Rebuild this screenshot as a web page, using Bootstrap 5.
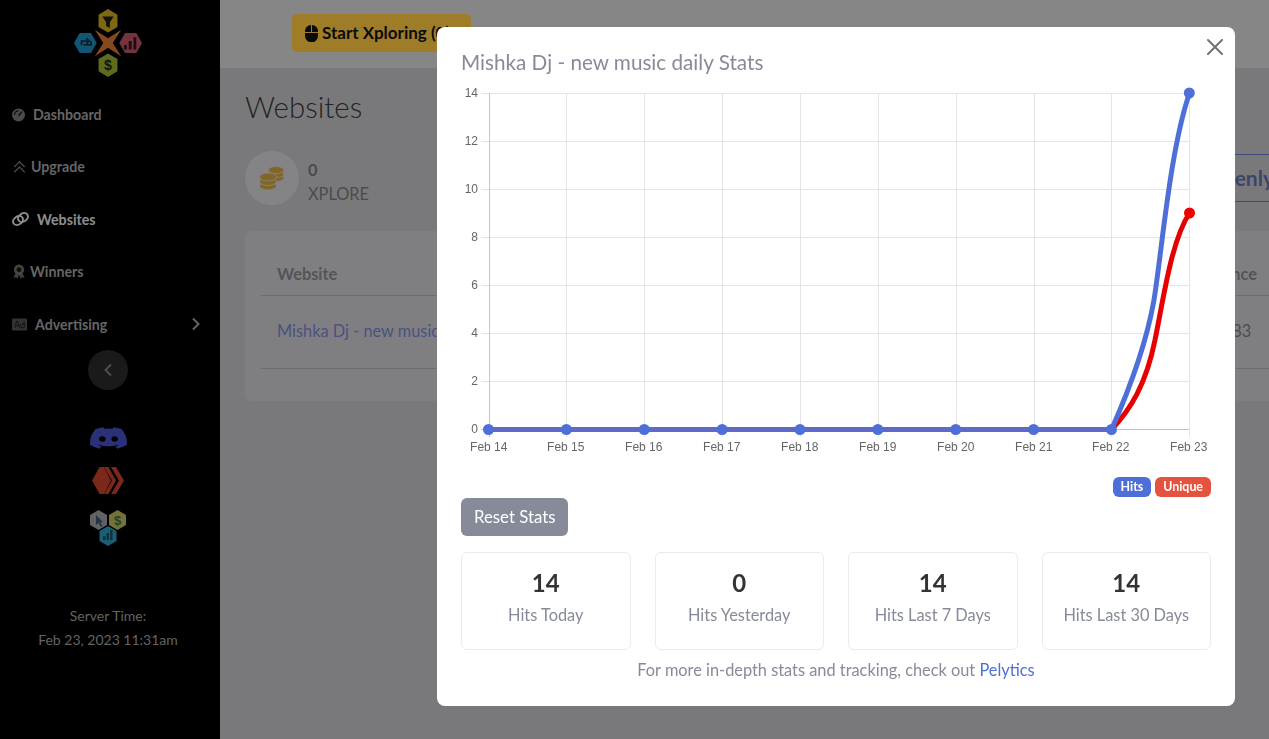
<!DOCTYPE html>
<html lang="en">
<head>
    <meta charset="UTF-8">
    <meta name="viewport" content="width=device-width, initial-scale=1.0">
    <title>Websites</title>
    <link href="https://cdn.jsdelivr.net/npm/bootstrap@5.3.0/dist/css/bootstrap.min.css" rel="stylesheet">
    <style>
        body { font-family: "Lato", "Liberation Sans", sans-serif; font-size: 16.35px; background: #aeaeb1; overflow: hidden; color: #494949; height: 739px; }
        .modal-backdrop { --bs-backdrop-opacity: .3; }

        .side-bar { width: 220px; flex: 0 0 220px; height: 739px; background: #000; padding-right: 4px; }
        .side-logo { padding-top: 9px; height: 88.5px; }
        .side-link { height: 52.4px; padding-left: 12px; padding-right: 15px; color: #929292; font-size: 14.2px; font-weight: 700; text-decoration: none; }
        .side-link.active { color: #cbcbcb; }
        .side-toggle { width: 40px; height: 40px; background: #262626; }
        .side-socials { margin-top: 34px; gap: 14px; }
        .server-time { color: #8f8f8f; font-size: 14px; line-height: 24px; margin-top: 57px; }

        .main-area { width: 1100px; flex: 0 0 1100px; }
        .top-strip { height: 68px; background: #c0c0c0; padding: 14px 72px; }
        .btn-xplore { background: #e2b23a; color: #111; font-size: 17px; font-weight: 700; height: 38px; padding: 0 21px 0 13px; border: 0; border-radius: 5px; white-space: nowrap; }
        .page-area { padding: 19px 25px; }
        .page-title { font-size: 29.5px; font-weight: 300; line-height: 40px; color: #333; margin-bottom: 23px; }
        .coin-round { width: 54px; height: 54px; background: #bebec1; margin-right: 9px; }
        .coin-value { line-height: 24px; color: #6c6c70; padding-top: 8px; }
        .btn-heavenly { border: 1px solid #5a6ab0; border-radius: 5px; height: 48px; padding: 0 20px; color: #55649a; font-size: 21px; font-weight: 700; background: transparent; margin-top: -1px; }
        .sites-card { background: #b7b7b9; border: 0; border-radius: 6px; margin-top: 25px; height: 170px; padding: 16px; }
        .sites-table { --bs-table-bg: transparent; --bs-table-color: #6c6c70; --bs-border-color: #9d9d9f; table-layout: fixed; margin: 0; }
        .sites-table > thead > tr > th { height: 48px; color: #797980; padding: 14px 16px 6px; vertical-align: middle; }
        .sites-table > tbody > tr > td { height: 73px; vertical-align: middle; padding: 0 16px; }
        .sites-table a { color: #6a75ba; text-decoration: none; }
        .col-site { width: 923px; }

        .stats-dialog { width: 798px; max-width: 798px; margin: 27px 0 0 437px; }
        .stats-dialog .modal-content { border: 0; border-radius: 8px; color: #878a99; }
        .stats-dialog .modal-body { padding: 24px; }
        .stats-close { position: absolute; top: 8px; right: 8px; opacity: .55; }
        .stats-title { font-size: 20.7px; font-weight: 400; line-height: 22px; margin-bottom: 8px; color: #878a99; }
        .chart-svg { display: block; width: 750px; height: 380px; font-family: "Liberation Sans", sans-serif; font-size: 12px; }
        .chart-badge { color: #fff; font-size: 12.4px; font-weight: 700; height: 20px; padding: 0 8px; border-radius: 6px; line-height: 20px; }
        .badge-hits { background: #4f6fd8; }
        .badge-unique { background: #e5533f; }
        .btn-reset { background: #878a99; color: #fff; font-size: 16.8px; height: 38px; padding: 0 13px; border: 0; border-radius: 6px; margin-top: 1px; display: block; }
        .stat-box { border: 1px solid #e9ebec; border-radius: 6px; height: 98px; padding-top: 13px; text-align: center; }
        .stat-num { font-size: 24px; font-weight: 700; line-height: 34px; color: #333; }
        .stat-label { line-height: 30px; }
        .stats-foot { line-height: 24px; }
        .stats-foot a { color: #4f6fd8; text-decoration: none; }
    </style>
</head>
<body>
    <div class="d-flex">
        <nav class="side-bar d-flex flex-column">
            <div class="side-logo d-flex justify-content-center">
                <svg width="68" height="68" viewBox="0 0 72 72">
                    <polygon points="36,0 46,6 46,19 36,25 26,19 26,6" fill="#b5971c"/>
                    <polygon points="30,8 42,8 38,14 38,20 34,18 34,14" fill="#1a1a10"/>
                    <polygon points="36,47 46,53 46,66 36,72 26,66 26,53" fill="#87982a"/>
                    <text x="36" y="65" text-anchor="middle" font-size="15" font-weight="700" fill="#1a2010" font-family="Liberation Sans">$</text>
                    <polygon points="0,36 6,25.500 18,25.500 24,36 18,46.500 6,46.500" fill="#197ca8"/>
                    <path d="M8 38v-4h8m-3-3l3 3-3 3M18 34v4h-8" fill="none" stroke="#10303f" stroke-width="2"/>
                    <polygon points="48,36 54,25.500 66,25.500 72,36 66,46.500 54,46.500" fill="#a84a5c"/>
                    <path d="M53 43h3v-5h-3zM58 43h3v-9h-3zM63 43h3v-13h-3z" fill="#2c1218"/>
                    <polygon points="22,22 36,31 50,22 41,36 50,50 36,41 22,50 31,36" fill="#c0692b"/>
                </svg>
            </div>
            <a class="side-link d-flex align-items-center" href="#">
                <svg class="me-2" width="13" height="14" viewBox="0 0 16 16"><circle cx="8" cy="8" r="8" fill="#6b6b6b"/><path d="M8 9l4-5M3 8a5 5 0 0 1 5-5" stroke="#111" stroke-width="1.600" fill="none"/></svg>Dashboard
            </a>
            <a class="side-link d-flex align-items-center" href="#">
                <svg class="me-1" width="15" height="14" viewBox="0 0 16 16" fill="none" stroke="#626262" stroke-width="1.800"><path d="M2 8l6-6 6 6M2 14l6-6 6 6"/></svg>Upgrade
            </a>
            <a class="side-link active d-flex align-items-center" href="#">
                <svg class="me-2" width="17" height="14" viewBox="0 0 17 14" fill="none" stroke="#cbcbcb" stroke-width="2"><ellipse cx="6" cy="8.500" rx="5.300" ry="4" transform="rotate(-35 6 8.500)"/><ellipse cx="11" cy="5.500" rx="5.300" ry="4" transform="rotate(-35 11 5.500)"/></svg>Websites
            </a>
            <a class="side-link d-flex align-items-center" href="#">
                <svg class="me-1" width="14" height="15" viewBox="0 0 14 16"><path d="M3 10l-2 5 3-1 1 2 2-4 2 4 1-2 3 1-2-5z" fill="#585858"/><circle cx="7" cy="6" r="5.500" fill="#626262"/><circle cx="7" cy="6" r="2.600" fill="#161616"/></svg>Winners
            </a>
            <a class="side-link d-flex align-items-center" href="#">
                <svg class="me-2" width="15" height="13" viewBox="0 0 16 13"><rect width="16" height="13" rx="1.500" fill="#484848"/><path d="M3 10l2-7h1l2 7M4 8h3M13 3v7h-2a2 2 0 0 1 0-4h2" fill="none" stroke="#1a1a1a" stroke-width="1"/></svg>Advertising
                <svg class="ms-auto" width="10" height="14" viewBox="0 0 10 14" fill="none" stroke="#8f8f8f" stroke-width="2"><path d="M2 1.500l5.500 5.500-5.500 5.500"/></svg>
            </a>
            <div class="side-toggle rounded-circle d-flex align-items-center justify-content-center mx-auto">
                <svg width="10" height="14" viewBox="0 0 10 14" fill="none" stroke="#6e6e6e" stroke-width="2"><path d="M8 1.500l-5.500 5.500 5.500 5.500"/></svg>
            </div>
            <div class="side-socials d-flex flex-column align-items-center">
                <svg width="37" height="28" viewBox="0 0 16 16" preserveAspectRatio="none"><path fill="#3e47aa" d="M13.545 2.907a13.227 13.227 0 0 0-3.257-1.011.05.05 0 0 0-.052.025c-.141.25-.297.577-.406.833a12.19 12.19 0 0 0-3.658 0 8.258 8.258 0 0 0-.412-.833.051.051 0 0 0-.052-.025c-1.125.194-2.22.534-3.257 1.011a.041.041 0 0 0-.021.018C.356 6.024-.213 9.047.066 12.032c.001.014.01.028.021.037a13.276 13.276 0 0 0 3.995 2.02.05.05 0 0 0 .056-.019c.308-.42.582-.863.818-1.329a.05.05 0 0 0-.01-.059.051.051 0 0 0-.018-.011 8.875 8.875 0 0 1-1.248-.595.05.05 0 0 1-.02-.066.051.051 0 0 1 .015-.019c.084-.063.168-.129.248-.195a.05.05 0 0 1 .051-.007c2.619 1.196 5.454 1.196 8.041 0a.052.052 0 0 1 .053.007c.08.066.164.132.248.195a.051.051 0 0 1-.004.085 8.254 8.254 0 0 1-1.249.594.05.05 0 0 0-.03.03.052.052 0 0 0 .003.041c.24.465.515.909.817 1.329a.05.05 0 0 0 .056.019 13.235 13.235 0 0 0 4.001-2.02.049.049 0 0 0 .021-.037c.334-3.451-.559-6.449-2.366-9.106a.034.034 0 0 0-.02-.019Zm-8.198 7.307c-.789 0-1.438-.724-1.438-1.612 0-.889.637-1.613 1.438-1.613.807 0 1.45.73 1.438 1.613 0 .888-.637 1.612-1.438 1.612Zm5.316 0c-.788 0-1.438-.724-1.438-1.612 0-.889.637-1.613 1.438-1.613.807 0 1.451.73 1.438 1.613 0 .888-.631 1.612-1.438 1.612Z"/></svg>
                <svg width="32" height="29" viewBox="0 0 32 29"><polygon points="0,14.500 7.500,1 12,1 19,14.500 12,28 7.500,28" fill="#b03a28"/><polygon points="12,1 16.500,1 24,14.500 16.500,28 12,28 20,14.500" fill="#b03a28"/><polygon points="19,1 24,1 32,14.500 24,28 19,28 27,14.500" fill="#b03a28"/></svg>
                <svg width="40" height="38" viewBox="0 0 40 38">
                    <polygon points="10.500,1 19,6 19,16 10.500,21 2,16 2,6" fill="#8d8d90"/>
                    <polygon points="8,6 8,16 10.500,14 13,18 14.500,17 12.500,13.500 15,13" fill="#33505e"/>
                    <polygon points="29.500,1 38,6 38,16 29.500,21 21,16 21,6" fill="#a8a452"/>
                    <text x="29.500" y="16" text-anchor="middle" font-size="13" font-weight="700" fill="#33603e" font-family="Liberation Sans">$</text>
                    <polygon points="20,17 28.500,22 28.500,32 20,37 11.500,32 11.500,22" fill="#2788a8"/>
                    <path d="M15 31h2.500v-4H15zM18.500 31h2.500v-7h-2.500zM22 31h2.500v-10H22z" fill="#17485a"/>
                </svg>
            </div>
            <div class="server-time text-center">Server Time:<br>Feb 23, 2023 11:31am</div>
        </nav>

        <main class="main-area">
            <div class="top-strip">
                <button class="btn-xplore d-inline-flex align-items-center" type="button">
                    <svg class="me-1" width="13" height="17" viewBox="0 0 13 17"><path d="M6 0v7H0V6a6 6 0 0 1 6-6zM7 0a6 6 0 0 1 6 6v1H7zM0 8h13v3a6 6 0 0 1-13 0z" fill="#111"/></svg>Start Xploring (0)
                </button>
            </div>
            <div class="page-area">
                <h1 class="page-title">Websites</h1>
                <div class="d-flex align-items-center">
                    <div class="coin-round rounded-circle d-flex align-items-center justify-content-center">
                        <svg width="26" height="26" viewBox="0 0 26 26" fill="#bb9238" stroke="#bebec1" stroke-width=".8">
                            <ellipse cx="17" cy="13" rx="8" ry="3.500"/><ellipse cx="17" cy="9" rx="8" ry="3.500"/><ellipse cx="17" cy="5" rx="8" ry="3.500"/>
                            <ellipse cx="9" cy="21" rx="8.500" ry="4"/><ellipse cx="9" cy="16.500" rx="8.500" ry="4"/><ellipse cx="9" cy="12" rx="8.500" ry="4"/>
                        </svg>
                    </div>
                    <div class="coin-value">
                        <div class="fw-bold">0</div>
                        <div>XPLORE</div>
                    </div>
                    <button class="btn-heavenly ms-auto" type="button">Heavenly</button>
                </div>
                <div class="card sites-card">
                    <table class="table sites-table">
                        <thead>
                            <tr><th class="col-site">Website</th><th>Balance</th></tr>
                        </thead>
                        <tbody>
                            <tr><td><a href="#">Mishka Dj - new music daily</a></td><td>214.83</td></tr>
                        </tbody>
                    </table>
                </div>
            </div>
        </main>
    </div>

    <div class="modal-backdrop show"></div>
    <div class="modal d-block" tabindex="-1">
        <div class="modal-dialog stats-dialog">
            <div class="modal-content">
                <button class="btn-close stats-close" type="button" aria-label="Close"></button>
                <div class="modal-body">
                    <h5 class="stats-title">Mishka Dj - new music daily Stats</h5>
                    <svg id="chart" class="chart-svg" viewBox="461 81 750 380"></svg>
                    <div class="d-flex justify-content-end gap-1 mt-3">
                        <span class="chart-badge badge-hits">Hits</span>
                        <span class="chart-badge badge-unique">Unique</span>
                    </div>
                    <button class="btn-reset" type="button">Reset Stats</button>
                    <div id="stats" class="row gx-4 mt-3"></div>
                    <div class="stats-foot text-center mt-2">For more in-depth stats and tracking, check out <a href="#">Pelytics</a></div>
                </div>
            </div>
        </div>
    </div>

    <script src="https://cdn.jsdelivr.net/npm/bootstrap@5.3.0/dist/js/bootstrap.bundle.min.js"></script>
    <script>
        const days = ['Feb 14', 'Feb 15', 'Feb 16', 'Feb 17', 'Feb 18', 'Feb 19', 'Feb 20', 'Feb 21', 'Feb 22', 'Feb 23'];
        const xAt = i => 488.5 + i * 77.87;
        const yAt = v => 429 - v * 24;
        let svg = '';

        for (let v = 0; v <= 14; v += 2) {
            const y = yAt(v) + .5;
            svg += `<line x1="481" x2="1189.500" y1="${y}" y2="${y}" stroke="${v ? '#e5e5e5' : '#c4c4c4'}"/>`;
            svg += `<text x="478" y="${y + 3.500}" text-anchor="end" fill="#666">${v}</text>`;
        }
        days.forEach((d, i) => {
            const x = Math.round(xAt(i)) + .5;
            svg += `<line x1="${x}" x2="${x}" y1="93" y2="437" stroke="${i ? '#e5e5e5' : '#c4c4c4'}"/>`;
            svg += `<text x="${x - .7}" y="451" text-anchor="middle" fill="#666">${d}</text>`;
        });

        // red then blue curves from Feb 22, the flat stretch is both lines mixed
        svg += `<path d="M1111.500 429.500 C1130 410,1146 385,1155 340 C1165 290,1172 240,1189.500 213" fill="none" stroke="#e60000" stroke-width="5"/>`;
        svg += `<circle cx="1189.500" cy="213" r="5.500" fill="#f00000"/>`;
        svg += `<path d="M1111.500 429.500 C1130 388,1146 345,1154 300 C1162 250,1170 150,1189.500 93" fill="none" stroke="#4f6fd8" stroke-width="5"/>`;
        svg += `<path d="M${xAt(0)} 429.500H1111.500" fill="none" stroke="#5f69c8" stroke-width="5"/>`;
        days.forEach((d, i) => {
            svg += `<circle cx="${xAt(i)}" cy="${i == 9 ? 93 : 429.5}" r="5.500" fill="#4f6fd8"/>`;
        });
        document.getElementById('chart').innerHTML = svg;

        const stats = [['14', 'Hits Today'], ['0', 'Hits Yesterday'], ['14', 'Hits Last 7 Days'], ['14', 'Hits Last 30 Days']];
        document.getElementById('stats').innerHTML = stats.map(s => `
            <div class="col-3">
                <div class="stat-box">
                    <div class="stat-num">${s[0]}</div>
                    <div class="stat-label">${s[1]}</div>
                </div>
            </div>
        `).join('');
    </script>
</body>
</html>
